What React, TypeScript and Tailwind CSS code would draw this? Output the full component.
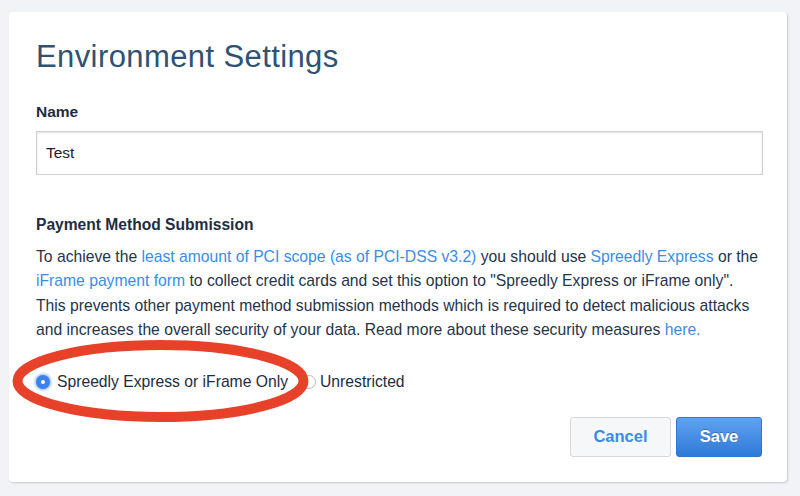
import { useState } from "react";

const font = { fontFamily: '"Liberation Sans", Arial, sans-serif' };

export default function App() {
  const [mode, setMode] = useState("express");
  const [name, setName] = useState("Test");

  return (
    <div className="min-h-screen w-full bg-[#f2f3f7] pt-[12px] pl-[9px] pr-[13px] pb-[14px]" style={font}>
      <div className="relative bg-white rounded-[4px] shadow-[1px_1px_2px_rgba(0,0,0,0.18)] h-[470px] px-[27px] pt-[25px]">
        <h1 className="text-[31px] leading-[40px] text-[#2f5273] tracking-[0.4px]">Environment Settings</h1>

        <label className="block mt-[25px] text-[15.5px] font-bold text-[#1d2d42] leading-[20px]">Name</label>
        <input
          value={name}
          onChange={(e) => setName(e.target.value)}
          className="block mt-[9px] w-[727px] h-[44px] border border-[#d0d0d0] shadow-[inset_0_1px_2px_rgba(0,0,0,0.12)] px-[9px] text-[15.5px] text-[#222] outline-none"
        />

        <h2 className="mt-[40px] text-[15.6px] font-bold text-[#1d2d42] leading-[20px]">Payment Method Submission</h2>
        <p className="mt-[10px] text-[15.7px] leading-[24.4px] text-[#24344a]">
          To achieve the <a className="text-[#3a8de6]">least amount of PCI scope (as of PCI-DSS v3.2)</a> you should use{" "}
          <a className="text-[#3a8de6]">Spreedly Express</a> or the
          <br />
          <a className="text-[#3a8de6]">iFrame payment form</a> to collect credit cards and set this option to "Spreedly Express or iFrame only".
          <br />
          This prevents other payment method submission methods which is required to detect malicious attacks
          <br />
          and increases the overall security of your data. Read more about these security measures{" "}
          <a className="text-[#3a8de6]">here.</a>
        </p>

        <div className="mt-[29px] flex items-center text-[15.7px] text-[#1d2d42] leading-[20px]">
          <button onClick={() => setMode("express")} className="flex items-center">
            <span
              className={`w-[14px] h-[14px] rounded-full flex items-center justify-center ${
                mode === "express"
                  ? "bg-[#3b82ef] shadow-[0_0_3px_1px_rgba(59,130,239,0.6)]"
                  : "border border-[#bbb] bg-white"
              }`}
            >
              {mode === "express" && <span className="w-[4px] h-[4px] rounded-full bg-white" />}
            </span>
            <span className="ml-[7px]">Spreedly Express or iFrame Only</span>
          </button>
          <button onClick={() => setMode("unrestricted")} className="flex items-center ml-[14px]">
            <span
              className={`w-[14px] h-[14px] rounded-full flex items-center justify-center ${
                mode === "unrestricted"
                  ? "bg-[#3b82ef] shadow-[0_0_3px_1px_rgba(59,130,239,0.6)]"
                  : "border border-[#bbb] bg-white"
              }`}
            >
              {mode === "unrestricted" && <span className="w-[4px] h-[4px] rounded-full bg-white" />}
            </span>
            <span className="ml-[4px]">Unrestricted</span>
          </button>
        </div>

        <div className="mt-[25px] flex justify-end gap-[5px] mr-[-2px]">
          <button className="w-[101px] h-[40px] rounded-[3px] border border-[#d6d8dc] bg-[#f6f7f9] text-[16.5px] font-bold text-[#3a8de6]">
            Cancel
          </button>
          <button className="w-[86px] h-[40px] rounded-[3px] border border-[#2f76d2] bg-gradient-to-b from-[#5fa3f0] to-[#2e78d8] text-[16.5px] font-bold text-white [text-shadow:0_-1px_0_rgba(0,0,0,0.25)]">
            Save
          </button>
        </div>

        {/* annotation circle drawn over the radio option */}
        <svg className="absolute left-0 top-0 pointer-events-none" width="320" height="440">
          <ellipse cx="151.5" cy="369" rx="143" ry="36" fill="none" stroke="#e8412a" strokeWidth="10" />
        </svg>
      </div>
    </div>
  );
}
